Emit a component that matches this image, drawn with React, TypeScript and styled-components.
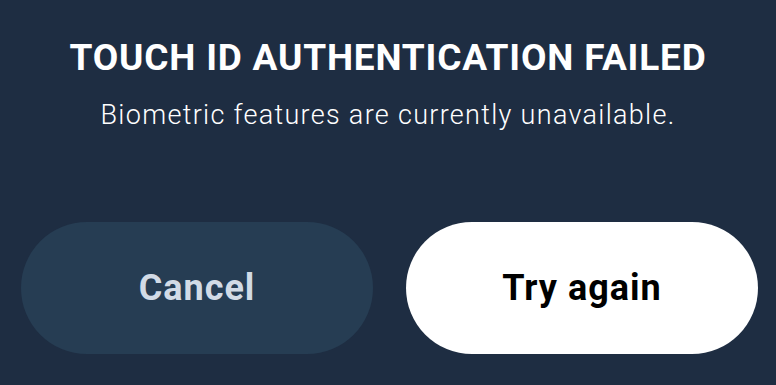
import React from "react";
import styled, { createGlobalStyle } from "styled-components";

const Global = createGlobalStyle`
  html, body { margin: 0; padding: 0; background: #1e2d42; }
  body { font-family: Roboto, "Liberation Sans", sans-serif; }
`;

const Screen = styled.div`
  width: 776px;
  height: 385px;
  background: #1e2d42;
  display: flex;
  flex-direction: column;
  align-items: center;
  box-sizing: border-box;
  padding-top: 36px;
  overflow: hidden;
`;

const Title = styled.h1`
  margin: 0;
  font-size: 37px;
  line-height: 44px;
  font-weight: 700;
  color: #ffffff;
  letter-spacing: 0.8px;
  text-align: center;
`;

const Subtitle = styled.p`
  margin: 19px 0 0;
  font-size: 27px;
  line-height: 32px;
  font-weight: 300;
  color: #ffffff;
  letter-spacing: 1.3px;
  text-align: center;
`;

const Actions = styled.div`
  display: grid;
  grid-template-columns: 352px 352px;
  column-gap: 33px;
  margin-top: 91px;
  padding-left: 3px;
`;

const Button = styled.button<{ $primary?: boolean }>`
  height: 132px;
  border: none;
  border-radius: 66px;
  background: ${(p) => (p.$primary ? "#ffffff" : "#263d53")};
  color: ${(p) => (p.$primary ? "#000000" : "#d2dbe6")};
  font-family: Roboto, "Liberation Sans", sans-serif;
  font-size: 36px;
  font-weight: 700;
  letter-spacing: 1px;
  display: flex;
  align-items: center;
  justify-content: center;
  cursor: pointer;
  padding: 0;
`;

export default function App() {
  return (
    <>
      <Global />
      <Screen>
        <Title>TOUCH ID AUTHENTICATION FAILED</Title>
        <Subtitle>Biometric features are currently unavailable.</Subtitle>
        <Actions>
          <Button>Cancel</Button>
          <Button $primary>Try again</Button>
        </Actions>
      </Screen>
    </>
  );
}
